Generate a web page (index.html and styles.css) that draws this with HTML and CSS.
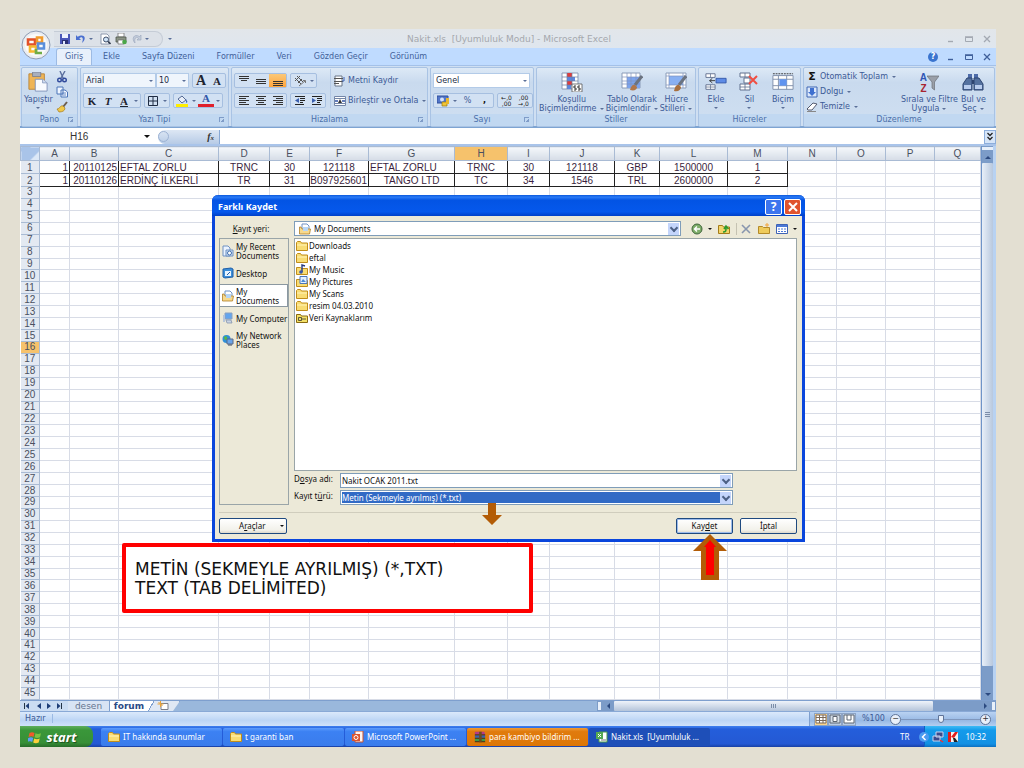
FILE: index.html
```html
<!DOCTYPE html>
<html lang="tr">
<head>
    <meta charset="UTF-8">
    <meta name="viewport" content="width=device-width, initial-scale=1.0">
    <title>Nakit.xls - Microsoft Excel</title>
    <link rel="stylesheet" href="styles.css">
</head>
<body>
    <!-- Icon sprite -->
    <svg class="sprite" aria-hidden="true">
        <symbol id="i-save" viewBox="0 0 12 12"><path d="M1 1h10v10H1z" fill="#4a56b8"/><path d="M3 1h6v4H3z" fill="#eef2ff"/><path d="M3 7h6v4H3z" fill="#2b2f70"/><path d="M4 8h2v3H4z" fill="#dfe6ff"/></symbol>
        <symbol id="i-undo" viewBox="0 0 12 12"><path d="M1 2v5h5L4.300 5.300C7 3 9 5 7 10c5-4 3-10-4.500-6.300z" fill="#4a6fd0"/></symbol>
        <symbol id="i-redo" viewBox="0 0 12 12"><path d="M10 2v5H6l1.500-1.600C5 3 3 5 4 10 0 6 3 0 8.500 3.600z" fill="#c3ccdb" stroke="#98a5ba" stroke-width=".6"/></symbol>
        <symbol id="i-preview" viewBox="0 0 12 12"><path d="M2 1h6l2 2v8H2z" fill="#fff" stroke="#77849c" stroke-width=".8"/><circle cx="7" cy="6.500" r="2.500" fill="#cfe3f7" stroke="#40506c"/><path d="M9 8.500l2.500 2.500" stroke="#30394c" stroke-width="1.600"/></symbol>
        <symbol id="i-print" viewBox="0 0 12 12"><path d="M3 0h6v4H3z" fill="#fff" stroke="#666" stroke-width=".7"/><path d="M1 4h10v5H1z" fill="#8b9486" stroke="#4e554b" stroke-width=".8"/><path d="M3 7h6v4H3z" fill="#fff" stroke="#666" stroke-width=".7"/><circle cx="9.500" cy="9" r="2.300" fill="#4aa648"/></symbol>
        <symbol id="i-paste" viewBox="0 0 22 22"><path d="M1 2h17v17H1z" fill="#efb556" stroke="#b98437"/><path d="M5 0h9v5H5z" fill="#a8afbd" stroke="#6e7890" stroke-width=".8"/><path d="M8 8h8l5 4v9H8z" fill="#f8fbff" stroke="#7f92b8"/><path d="M16 8v4h5" fill="#cfdcf2" stroke="#7f92b8" stroke-width=".8"/></symbol>
        <symbol id="i-cut" viewBox="0 0 12 12"><path d="M4 0l3.500 8M9 0L4.500 8" stroke="#5b6f9e" stroke-width="1.400"/><circle cx="3.500" cy="9" r="1.800" fill="none" stroke="#304a9c" stroke-width="1.400"/><circle cx="8.500" cy="9" r="1.800" fill="none" stroke="#304a9c" stroke-width="1.400"/></symbol>
        <symbol id="i-copy" viewBox="0 0 12 12"><path d="M1 1h6v7H1zM5 4h4l2.500 2v5H5z" fill="#eef5ff" stroke="#4b74b8"/><path d="M6 7h4M6 9h4" stroke="#4b74b8" stroke-width=".8"/></symbol>
        <symbol id="i-brush" viewBox="0 0 12 12"><path d="M11 1L7 6" stroke="#6d5d4d" stroke-width="2"/><path d="M1 8c3 0 3-4 6-3l2 2c0 3-3 4-6 4z" fill="#f0c84a" stroke="#a37a1c" stroke-width=".7"/></symbol>
        <symbol id="i-border" viewBox="0 0 12 12"><path d="M1.500 1.500h9v9h-9zM6 1v10M1 6h10" fill="none" stroke="#1e2c44"/></symbol>
        <symbol id="i-fill" viewBox="0 0 12 12"><path d="M2 4l4-3 4 4-4 3z" fill="#e8eef8" stroke="#556a95"/><path d="M10 4l1.500 3-1.500 1z" fill="#3e66b5"/><path d="M0 9h12v3H0z" fill="#ffee00"/></symbol>
        <symbol id="i-top" viewBox="0 0 12 12"><path d="M1 1.500h10M1 3.500h10M3 5.500h6" stroke="#333"/></symbol>
        <symbol id="i-middle" viewBox="0 0 12 12"><path d="M1 4.500h10M1 6.500h10M1 8.500h10" stroke="#333"/></symbol>
        <symbol id="i-bottom" viewBox="0 0 12 12"><path d="M1 6.500h10M1 8.500h10M1 10.500h10" stroke="#333"/></symbol>
        <symbol id="i-left" viewBox="0 0 12 12"><path d="M1 1.500h10M1 3.500h7M1 5.500h10M1 7.500h7M1 9.500h10" stroke="#333"/></symbol>
        <symbol id="i-center" viewBox="0 0 12 12"><path d="M1 1.500h10M3 3.500h6M1 5.500h10M3 7.500h6M1 9.500h10" stroke="#333"/></symbol>
        <symbol id="i-right" viewBox="0 0 12 12"><path d="M1 1.500h10M4 3.500h7M1 5.500h10M4 7.500h7M1 9.500h10" stroke="#333"/></symbol>
        <symbol id="i-outdent" viewBox="0 0 12 12"><path d="M1 1.500h10M6 3.500h5M6 5.500h5M6 7.500h3M1 9.500h9" stroke="#222"/><path d="M5 3v5L1 5.500z" fill="#3b5fae"/></symbol>
        <symbol id="i-indent" viewBox="0 0 12 12"><path d="M1 1.500h10M6 3.500h5M6 5.500h5M6 7.500h3M1 9.500h9" stroke="#222"/><path d="M1 3v5l4-2.500z" fill="#3b5fae"/></symbol>
        <symbol id="i-orient" viewBox="0 0 12 12"><path d="M1 3l6 6M3 1l6 6M1 6l5-5M4 8l4-4" stroke="#555" fill="none"/><path d="M5 11l6-5M9 5.500h2.500V8" stroke="#777" fill="none"/></symbol>
        <symbol id="i-wrap" viewBox="0 0 12 12"><path d="M1 1h7v10H1z" fill="#fff" stroke="#6b7688"/><path d="M0 3.500h9M0 6.500h9M0 8.500h5" stroke="#555"/><path d="M10 2v4H8" fill="none" stroke="#3f63b4"/></symbol>
        <symbol id="i-merge" viewBox="0 0 12 12"><path d="M.5 1.500h11v9H.5zM.5 3.500h11M.5 8.500h11" fill="#fff" stroke="#7486a8"/><path d="M1 6h3M11 6H8" stroke="#3254a8" stroke-width="1.500"/><path d="M6 4l2 4H4z" fill="#333"/></symbol>
        <symbol id="i-money" viewBox="0 0 12 12"><path d="M0 1h11v7H0z" fill="#5276c9" stroke="#2f4f9c"/><circle cx="5" cy="4.500" r="2" fill="#d5e2fa"/><path d="M5 7h5v4H5z" fill="#f1c537" stroke="#9a7a12" stroke-width=".7"/><path d="M9 3h3v6H9z" fill="#e9b62d"/></symbol>
        <symbol id="i-condfmt" viewBox="0 0 22 20"><path d="M1 1h16v16H1z" fill="#fff" stroke="#8b9cb8"/><path d="M6 1h5v4H6zM6 9h5v4H6z" fill="#e03c3c"/><path d="M6 5h8v4H6zM6 13h4v4H6z" fill="#5c86e0"/><path d="M1 5h16M1 9h16M1 13h16M6 1v16M11 1v16" stroke="#6b7ea4" stroke-width=".7"/><path d="M11 12h10v8H11z" fill="#fff" stroke="#555" stroke-width=".8"/><path d="M15 14h-2v2h2v2h-2M19 14h-2v2h2v2h-2" fill="none" stroke="#333"/></symbol>
        <symbol id="i-tablefmt" viewBox="0 0 22 20"><path d="M1 1h18v15H1z" fill="#fff" stroke="#8b9cb8"/><path d="M6 5h13v11H6z" fill="#7ba4ee"/><path d="M1 5h18M1 9h18M1 12h18M6 1v15M10 1v15M15 1v15" stroke="#7f94bd" stroke-width=".7"/><path d="M21 4l-7 9" stroke="#6b7380" stroke-width="3"/><path d="M9 18c1-4 3-6 5-5l2 2c0 3-3 4-7 3z" fill="#b0764a"/></symbol>
        <symbol id="i-cellstyle" viewBox="0 0 22 20"><path d="M1 1h20v15H1z" fill="#fff" stroke="#8b9cb8"/><path d="M4 4h14v9H4z" fill="#88b0f2"/><path d="M1 4h20M1 13h20M4 1v15M18 1v15" stroke="#7f94bd" stroke-width=".7"/><path d="M21 4l-7 9" stroke="#6b7380" stroke-width="3"/><path d="M9 19c1-5 3-7 5-6l2 2c0 3-3 5-7 4z" fill="#a8703f"/></symbol>
        <symbol id="i-insert" viewBox="0 0 24 20"><path d="M1 1h10v4H1zM1 13h10v5H1z" fill="#fff" stroke="#60708e"/><path d="M6 1v4M6 13v5M1 15.500h10" stroke="#60708e" stroke-width=".8"/><path d="M12 6h11v5H12z" fill="#5d8be6" stroke="#3258a8"/><path d="M5 8.500h6M8 6L5 8.500 8 11" fill="none" stroke="#333"/></symbol>
        <symbol id="i-delete" viewBox="0 0 22 20"><path d="M2 1h10v4H2zM6 6h6v5H6zM2 12h10v6H2z" fill="#fff" stroke="#60708e"/><path d="M7 1v4M7 12v6M2 15h10" stroke="#60708e" stroke-width=".8"/><path d="M11 4l8 8M19 4l-8 8" stroke="#ef4e42" stroke-width="2"/></symbol>
        <symbol id="i-format" viewBox="0 0 24 20"><path d="M1 3h22v15H1z" fill="#fff" stroke="#7d8da8"/><path d="M7 3v15M16 3v15M1 7h22M1 14h22" stroke="#7d8da8"/><path d="M8 7h8v7H8z" fill="#5f93ef"/><path d="M1 1h22" stroke="#333" stroke-dasharray="2 1"/></symbol>
        <symbol id="i-down" viewBox="0 0 12 12"><path d="M1 1h10v10H1z" fill="#dbe8fc" stroke="#3f66b4"/><path d="M4 2h4v4h2L6 10 2 6h2z" fill="#3f70d0"/></symbol>
        <symbol id="i-eraser" viewBox="0 0 12 12"><path d="M1 8l6-6 4 1-5 6H2z" fill="#fff" stroke="#555b70"/><path d="M1 10.500h9" stroke="#888"/></symbol>
        <symbol id="i-funnel" viewBox="0 0 12 16"><path d="M0 1h12L7.500 7v8L5 13V7z" fill="#9a9fa8" stroke="#6c7077" stroke-width=".7"/></symbol>
        <symbol id="i-find" viewBox="0 0 22 20"><path d="M6 2h4v5H6zM12 2h4v5h-4z" fill="#4d6ba8"/><path d="M5 6h5v12H1v-6zM12 6h5l4 6v6h-9z" fill="#54719f" stroke="#2d4470"/><path d="M10 8h2v4h-2z" fill="#2d4470"/><path d="M2 13h7v4H2zM13 13h7v4h-7z" fill="#b9cdee"/></symbol>
        <symbol id="i-folder" viewBox="0 0 12 12"><path d="M.5 10.500v-8l1-1h3l1 1.500h6v7.500z" fill="#f8dc74" stroke="#c08d1a"/><path d="M1 5h10" stroke="#fff3b8"/></symbol>
        <symbol id="i-music" viewBox="0 0 12 12"><path d="M.5 10.500v-7h4l1 1h6v6z" fill="#f8dc74" stroke="#c08d1a"/><path d="M6 8V1l3 1" fill="none" stroke="#26387c" stroke-width="1.400"/><circle cx="5" cy="8" r="1.800" fill="#3956a8"/></symbol>
        <symbol id="i-pics" viewBox="0 0 12 12"><path d="M.5 10.500v-7h4l1 1h6v6z" fill="#f8dc74" stroke="#c08d1a"/><path d="M4 .5h7v7H4z" fill="#e6f1ff" stroke="#4c76b8"/><path d="M5 6l2-3 3 3z" fill="#4f8bd2"/></symbol>
        <symbol id="i-dbfolder" viewBox="0 0 12 12"><path d="M.5 10.500v-8h4l1 1.500h6v6.500z" fill="#f3e067" stroke="#8a6a10"/><path d="M2.500 5.500h3v3h-3zM6 7h4" fill="none" stroke="#333" stroke-width=".8"/></symbol>
        <symbol id="i-recent" viewBox="0 0 12 12"><path d="M1 1h5l2 2v8H1z" fill="#eaf3ff" stroke="#6f91c2"/><path d="M4 5h7v6H4z" fill="#cfe0f5" stroke="#6f91c2"/><circle cx="7.500" cy="8" r="2" fill="#fff" stroke="#406fae"/></symbol>
        <symbol id="i-desktop" viewBox="0 0 12 12"><path d="M1 2l8-1 2 1v8l-8 1-2-1z" fill="#3c8ed8" stroke="#1f5fa8"/><path d="M3 4h6v5H3z" fill="#e8f4ff"/><path d="M5 8l3-3" stroke="#1f5fa8"/></symbol>
        <symbol id="i-docs" viewBox="0 0 12 12"><path d="M3 1h5l2 2v5H3z" fill="#fff" stroke="#6f91c2"/><path d="M.5 4v7h10l1-5H3L2 4z" fill="#f7d98d" stroke="#b07f25" stroke-width=".8"/><path d="M4 4h5v4H4z" fill="#b6d5f4"/></symbol>
        <symbol id="i-computer" viewBox="0 0 12 12"><path d="M3 1h7v6H3z" fill="#63a5ee" stroke="#8aa0c0"/><path d="M4 8h5l1 3H5z" fill="#c9d4e4" stroke="#7d8ca8" stroke-width=".7"/><path d="M1 3h2v7H1z" fill="#b8c6da"/></symbol>
        <symbol id="i-network" viewBox="0 0 12 12"><circle cx="4.500" cy="5" r="4" fill="#2f8fd8"/><path d="M2 3c2-2 4 0 3 2s-3 1-3-2z" fill="#58b847"/><path d="M5 5h6v5H5z" fill="#6aa4ea" stroke="#5c6a86"/><path d="M6 11h4" stroke="#3c4a66"/></symbol>
        <symbol id="i-back" viewBox="0 0 12 12"><circle cx="6" cy="6" r="5" fill="#7fae6b" stroke="#40663a"/><path d="M9 6H4M6 3.500L3.500 6 6 8.500" fill="none" stroke="#fff" stroke-width="1.400"/></symbol>
        <symbol id="i-upfolder" viewBox="0 0 12 12"><path d="M.5 10.500v-8h4l1 1.500h6v6.500z" fill="#f4d56a" stroke="#a47c18"/><path d="M5 9c3 0 3-1 3-4M6 6l2-3 2.500 3" fill="none" stroke="#2d9a2d" stroke-width="1.600"/></symbol>
        <symbol id="i-x" viewBox="0 0 12 12"><path d="M2 2l8 8M10 2l-8 8" stroke="#8896ae" stroke-width="1.600"/></symbol>
        <symbol id="i-newfolder" viewBox="0 0 12 12"><path d="M.5 10.500v-7h4l1 1h6v6z" fill="#efcb5a" stroke="#b48a28"/><path d="M9 0v4M7 2h4" stroke="#f3a53a"/></symbol>
        <symbol id="i-views" viewBox="0 0 12 12"><path d="M.5 1.500h11v9H.5z" fill="#fff" stroke="#3f63b4"/><path d="M1 2h10v2H1z" fill="#4c79d8"/><path d="M2 6h2M5 6h2M8 6h2M2 8.500h2M5 8.500h2M8 8.500h2" stroke="#4c79d8"/></symbol>
        <symbol id="i-flag" viewBox="0 0 14 14"><path d="M1.500 3c2-1 3-1 5 0L5.500 7C4 6 3 6 .500 7z" fill="#f15a2b"/><path d="M7.500 3.300c2 1 3 1 5.500 0l-1 4c-2 1-4 1-5.500 0z" fill="#7cc242"/><path d="M.2 8c2-1 3.500-1 5 0l-1 4c-1.500-1-3-1-5 0z" fill="#5d9df5"/><path d="M6.200 8.500c2 1 3.500 1 5.500 0l-1 4c-2 1-4 1-5.500 0z" fill="#fbd03c"/></symbol>
        <symbol id="i-ppt" viewBox="0 0 12 12"><path d="M3 0h8v11H3z" fill="#fff3ee" stroke="#c9532f"/><path d="M0 3h8v7H0z" fill="#dc5430"/><circle cx="4" cy="6.500" r="2" fill="none" stroke="#fff"/></symbol>
        <symbol id="i-rar" viewBox="0 0 14 12"><path d="M1 0h11l1 3H1z" fill="#b23a87"/><path d="M1 4h12v3H1z" fill="#3262b8"/><path d="M1 8h12v3H1z" fill="#3e9c48"/><path d="M1 3.500h12M1 7.500h12M1 11.500h12" stroke="#222"/><path d="M6 0h3v12H6z" fill="#6b4b20"/></symbol>
        <symbol id="i-xls" viewBox="0 0 12 12"><path d="M3 1h8v10H3z" fill="#fff" stroke="#4b9a4b"/><path d="M0 1h7v7H0z" fill="#55a852"/><path d="M2 3l3 3M5 3L2 6" stroke="#fff"/><path d="M5 9h5" stroke="#777"/></symbol>
        <symbol id="i-gridview" viewBox="0 0 12 10"><path d="M1 1h10v8H1zM4.500 1v8M8 1v8M1 3.500h10M1 6.500h10" fill="#fff" stroke="#79695a"/></symbol>
        <symbol id="i-pageview" viewBox="0 0 12 10"><path d="M1 1h10v8H1z" fill="#d6dfe9" stroke="#5d6673"/><path d="M4 2.500h4v5H4z" fill="#fff" stroke="#5d6673"/></symbol>
        <symbol id="i-breakview" viewBox="0 0 12 10"><path d="M1 1h10v8H1z" fill="#fff" stroke="#5d6673"/><path d="M4 1v5h4V1" fill="none" stroke="#5d6673"/></symbol>
        <symbol id="i-net" viewBox="0 0 12 12"><path d="M4 1h7v5H4zM1 5h7v5H1z" fill="#3b4a8c" stroke="#c9d3ee"/><path d="M8 9l3 2" stroke="#e33" stroke-width="1.500"/></symbol>
        <symbol id="i-kav" viewBox="0 0 12 12"><path d="M1 1h10v10H1z" fill="#f4f4f4"/><path d="M1 1h3v10H1zM4 6l4-5h3L7 7z" fill="#e01d1d"/><path d="M6 7h2l3 4H7z" fill="#222"/></symbol>
        <symbol id="i-winmin" viewBox="0 0 10 10"><path d="M2 7.500h5" stroke="currentColor" stroke-width="1.400"/></symbol>
        <symbol id="i-winmax" viewBox="0 0 10 10"><path d="M1.500 3.500h7v4h-7z" fill="none" stroke="currentColor"/><path d="M1 3h8" stroke="currentColor" stroke-width="1.500"/></symbol>
        <symbol id="i-winclose" viewBox="0 0 10 10"><path d="M2 2l6 6M8 2L2 8" stroke="currentColor" stroke-width="1.300"/></symbol>
    </svg>

    <main class="desktop">
        <!-- Title bar -->
        <header class="titlebar">
            <div class="quick-access">
                <button aria-label="Kaydet"><svg><use href="#i-save"/></svg></button>
                <button aria-label="Geri al"><svg><use href="#i-undo"/></svg><i class="caret"></i></button>
                <button aria-label="Baskı önizleme"><svg><use href="#i-preview"/></svg></button>
                <button aria-label="Yazdır"><svg><use href="#i-print"/></svg></button>
                <button class="faded" aria-label="Yinele"><svg><use href="#i-redo"/></svg><i class="caret"></i></button>
            </div>
            <button class="qa-more" aria-label="Özelleştir"><i class="caret"></i></button>
            <h1>Nakit.xls&nbsp; [Uyumluluk Modu] - Microsoft Excel</h1>
            <div class="win-buttons faded">
                <button aria-label="Simge"><svg><use href="#i-winmin"/></svg></button>
                <button aria-label="Önceki boyut"><svg><use href="#i-winmax"/></svg></button>
                <button aria-label="Kapat"><svg><use href="#i-winclose"/></svg></button>
            </div>
        </header>

        <button class="office" aria-label="Office">
            <svg viewBox="0 0 30 30"><circle cx="15" cy="15" r="14" fill="#eceef2" stroke="#8e9cb4"/><circle cx="15" cy="15" r="11" fill="#fafafa"/><g fill="none" stroke-width="2.600"><path d="M7 9.500h7v5H7z" stroke="#e2502a"/><path d="M16 7.500h5v5h-5z" stroke="#f09a2c"/><path d="M9 16.500h6v5H9z" stroke="#f6b830"/><path d="M17 13.500h6v5h-6z" stroke="#5a8fdc"/><path d="M15 19v4h6" stroke="#70ad47"/></g></svg>
        </button>

        <nav class="tabs">
            <a class="active" href="#giris">Giriş</a>
            <a href="#ekle">Ekle</a>
            <a href="#sayfa">Sayfa Düzeni</a>
            <a href="#formul">Formüller</a>
            <a href="#veri">Veri</a>
            <a href="#gozden">Gözden Geçir</a>
            <a href="#gorunum">Görünüm</a>
            <div class="win-buttons">
                <button class="help" aria-label="Yardım">?</button>
                <button aria-label="Simge"><svg><use href="#i-winmin"/></svg></button>
                <button aria-label="Önceki boyut"><svg><use href="#i-winmax"/></svg></button>
                <button aria-label="Kapat"><svg><use href="#i-winclose"/></svg></button>
            </div>
        </nav>

        <!-- Ribbon -->
        <section class="ribbon" id="giris">
            <div class="group g-clipboard">
                <div class="tools">
                    <button class="big"><svg class="large"><use href="#i-paste"/></svg>Yapıştır<i class="caret"></i></button>
                    <div class="stack">
                        <button aria-label="Kes"><svg><use href="#i-cut"/></svg></button>
                        <button aria-label="Kopyala"><svg><use href="#i-copy"/></svg></button>
                        <button aria-label="Biçim Boyacısı"><svg><use href="#i-brush"/></svg></button>
                    </div>
                </div>
                <h2>Pano<i class="launcher"></i></h2>
            </div>
            <div class="group g-font">
                <div class="tools">
                    <div class="rows">
                        <div class="row">
                            <div class="combos">
                                <span class="combo font-name"><select aria-label="Yazı tipi"><option>Arial</option></select><i class="caret"></i></span>
                                <span class="combo font-size"><select aria-label="Boyut"><option>10</option></select><i class="caret"></i></span>
                            </div>
                            <div class="set"><button class="letter grow">A</button><button class="letter">A</button></div>
                        </div>
                        <div class="row">
                            <div class="set"><button class="letter">K</button><button class="letter"><em>T</em></button><button class="letter"><u>A</u></button><i class="caret"></i></div>
                            <div class="set"><button aria-label="Kenarlık"><svg><use href="#i-border"/></svg></button><i class="caret"></i></div>
                            <div class="set"><button aria-label="Dolgu"><svg><use href="#i-fill"/></svg></button><i class="caret"></i><button class="letter color">A</button><i class="caret"></i></div>
                        </div>
                    </div>
                </div>
                <h2>Yazı Tipi<i class="launcher"></i></h2>
            </div>
            <div class="group g-align">
                <div class="tools">
                    <div class="rows">
                        <div class="row">
                            <div class="set"><button aria-label="Üst"><svg><use href="#i-top"/></svg></button><button aria-label="Orta"><svg><use href="#i-middle"/></svg></button><button class="on" aria-label="Alt"><svg><use href="#i-bottom"/></svg></button></div>
                            <div class="set"><button aria-label="Yönlendirme"><svg><use href="#i-orient"/></svg></button><i class="caret"></i></div>
                        </div>
                        <div class="row">
                            <div class="set"><button aria-label="Sola"><svg><use href="#i-left"/></svg></button><button aria-label="Ortala"><svg><use href="#i-center"/></svg></button><button aria-label="Sağa"><svg><use href="#i-right"/></svg></button></div>
                            <div class="set"><button aria-label="Girinti azalt"><svg><use href="#i-outdent"/></svg></button><button aria-label="Girinti artır"><svg><use href="#i-indent"/></svg></button></div>
                        </div>
                    </div>
                    <div class="rows divided">
                        <div class="row"><button class="wide"><svg><use href="#i-wrap"/></svg>Metni Kaydır</button></div>
                        <div class="row"><button class="wide"><svg><use href="#i-merge"/></svg>Birleştir ve Ortala<i class="caret"></i></button></div>
                    </div>
                </div>
                <h2>Hizalama<i class="launcher"></i></h2>
            </div>
            <div class="group g-number">
                <div class="tools">
                    <div class="rows">
                        <div class="row"><span class="combo format"><select aria-label="Sayı biçimi"><option>Genel</option></select><i class="caret"></i></span></div>
                        <div class="row">
                            <div class="set"><button aria-label="Para"><svg><use href="#i-money"/></svg></button><i class="caret"></i><button>%</button><button class="comma">,</button></div>
                            <div class="set"><button class="digits">←,0<br>,00</button><button class="digits">,00<br>→,0</button></div>
                        </div>
                    </div>
                </div>
                <h2>Sayı<i class="launcher"></i></h2>
            </div>
            <div class="group g-styles">
                <div class="tools">
                    <button class="big"><svg class="large"><use href="#i-condfmt"/></svg>Koşullu<span>Biçimlendirme<i class="caret"></i></span></button>
                    <button class="big"><svg class="large"><use href="#i-tablefmt"/></svg>Tablo Olarak<span>Biçimlendir<i class="caret"></i></span></button>
                    <button class="big"><svg class="large"><use href="#i-cellstyle"/></svg>Hücre<span>Stilleri<i class="caret"></i></span></button>
                </div>
                <h2>Stiller</h2>
            </div>
            <div class="group g-cells">
                <div class="tools">
                    <button class="big"><svg class="large"><use href="#i-insert"/></svg>Ekle<i class="caret"></i></button>
                    <button class="big"><svg class="large"><use href="#i-delete"/></svg>Sil<i class="caret"></i></button>
                    <button class="big"><svg class="large"><use href="#i-format"/></svg>Biçim<i class="caret"></i></button>
                </div>
                <h2>Hücreler</h2>
            </div>
            <div class="group g-edit">
                <div class="tools">
                    <div class="stack labels">
                        <button class="wide"><b class="sigma">Σ</b>Otomatik Toplam<i class="caret"></i></button>
                        <button class="wide"><svg><use href="#i-down"/></svg>Dolgu<i class="caret"></i></button>
                        <button class="wide"><svg><use href="#i-eraser"/></svg>Temizle<i class="caret"></i></button>
                    </div>
                    <button class="big"><span class="az"><span><b class="a">A</b><b class="z">Z</b></span><svg><use href="#i-funnel"/></svg></span>Sırala ve Filtre<span>Uygula<i class="caret"></i></span></button>
                    <button class="big"><svg class="large"><use href="#i-find"/></svg>Bul ve<span>Seç<i class="caret"></i></span></button>
                </div>
                <h2>Düzenleme</h2>
            </div>
        </section>

        <!-- Formula bar -->
        <div class="formula-bar">
            <input class="name-box" aria-label="Ad kutusu" value="H16">
            <i class="caret dark"></i>
            <button class="fx"><span class="knob"></span><em>f<small>x</small></em></button>
            <input class="formula" aria-label="Formül">
            <button class="expand" aria-label="Genişlet"><svg viewBox="0 0 8 12"><path d="M1.500 2L4 4.500 6.500 2M1.500 6L4 8.500 6.500 6" fill="none" stroke="#222" stroke-width="1.300"/></svg></button>
        </div>

        <!-- Worksheet -->
        <div class="sheet">
            <div class="cells">
                <table>
                    <colgroup>
                        <col class="c-head"><col class="c-a"><col class="c-b"><col class="c-c"><col class="c-d"><col class="c-e"><col class="c-f"><col class="c-g"><col class="c-h"><col class="c-i"><col class="c-j"><col class="c-k"><col class="c-l"><col class="c-m"><col class="c-n"><col class="c-n"><col class="c-n"><col>
                    </colgroup>
                    <thead>
                        <tr><th class="corner"></th><th>A</th><th>B</th><th>C</th><th>D</th><th>E</th><th>F</th><th>G</th><th class="current">H</th><th>I</th><th>J</th><th>K</th><th>L</th><th>M</th><th>N</th><th>O</th><th>P</th><th>Q</th></tr>
                    </thead>
                    <tbody id="rows">
                        <tr class="data"><th>1</th><td class="num">1</td><td class="num">20110125</td><td class="txt">EFTAL ZORLU</td><td>TRNC</td><td>30</td><td>121118</td><td class="txt">EFTAL ZORLU</td><td>TRNC</td><td>30</td><td>121118</td><td>GBP</td><td>1500000</td><td>1</td><td></td><td></td><td></td><td></td></tr>
                        <tr class="data"><th>2</th><td class="num">1</td><td class="num">20110126</td><td class="txt">ERDİNÇ İLKERLİ</td><td>TR</td><td>31</td><td class="num">B097925601</td><td>TANGO LTD</td><td>TC</td><td>34</td><td>1546</td><td>TRL</td><td>2600000</td><td>2</td><td></td><td></td><td></td><td></td></tr>
                    </tbody>
                </table>
            </div>
            <div class="vscroll">
                <span class="split"></span>
                <button class="up" aria-label="Yukarı"><i></i></button>
                <span class="thumb"><i class="grip"></i></span>
                <button class="down" aria-label="Aşağı"><i></i></button>
            </div>
        </div>

        <!-- Sheet tabs -->
        <div class="sheet-bar">
            <div class="sheet-nav">
                <svg viewBox="0 0 44 10"><path d="M4.500 2v6M41.500 2v6" stroke="#234"/><path d="M9 2v6L5.500 5zM21 2v6l-4-3zM27 2v6l4-3zM37 2v6l3.500-3z" fill="#1f3f78"/></svg>
            </div>
            <button class="sheet-tab">desen</button>
            <button class="sheet-tab active">forum</button>
            <button class="sheet-tab new" aria-label="Çalışma Sayfası Ekle"><svg viewBox="0 0 14 10"><path d="M4 2.500h7v6H4z" fill="#fff" stroke="#7b7f8a"/><path d="M3.500 0v6M.5 3h6M1.500 1l4 4" stroke="#e8a33a"/></svg></button>
            <span class="fill"></span>
            <div class="hscroll">
                <span class="split"></span>
                <button aria-label="Sola"><i class="lt"></i></button>
                <span class="thumb"><i class="grip"></i></span>
                <button aria-label="Sağa"><i class="rt"></i></button>
                <span class="split"></span>
            </div>
        </div>

        <!-- Status bar -->
        <footer class="status">
            <span class="ready">Hazır</span>
            <div class="zoom-area">
                <div class="views">
                    <button class="on" aria-label="Normal"><svg><use href="#i-gridview"/></svg></button>
                    <button aria-label="Sayfa düzeni"><svg><use href="#i-pageview"/></svg></button>
                    <button aria-label="Sayfa sonu"><svg><use href="#i-breakview"/></svg></button>
                </div>
                <span class="percent">%100</span>
                <button class="round" aria-label="Uzaklaştır">−</button>
                <input type="range" aria-label="Yakınlaştırma" min="0" max="100" value="50">
                <button class="round" aria-label="Yakınlaştır">+</button>
            </div>
        </footer>

        <!-- Windows taskbar -->
        <div class="taskbar">
            <button class="start"><svg><use href="#i-flag"/></svg>start</button>
            <button class="task"><svg><use href="#i-folder"/></svg>IT hakkında sunumlar</button>
            <button class="task"><svg><use href="#i-folder"/></svg>t garanti ban</button>
            <button class="task"><svg><use href="#i-ppt"/></svg>Microsoft PowerPoint ...</button>
            <button class="task alert"><svg><use href="#i-rar"/></svg>para kambiyo bildirim ...</button>
            <button class="task pressed"><svg><use href="#i-xls"/></svg>Nakit.xls&nbsp; [Uyumluluk ...</button>
            <span class="lang">TR</span>
            <div class="tray">
                <button class="chevron" aria-label="Gizli simgeler"><svg viewBox="0 0 10 10"><path d="M6.500 2L3.500 5l3 3" fill="none" stroke="#fff" stroke-width="1.500"/></svg></button>
                <svg><use href="#i-net"/></svg>
                <svg><use href="#i-kav"/></svg>
                <time>10:32</time>
            </div>
        </div>

        <!-- Save As dialog -->
        <form class="dialog" onsubmit="return false">
            <div class="dialog-title">
                <h2>Farklı Kaydet</h2>
                <button type="button" class="ask" aria-label="Yardım">?</button>
                <button type="button" class="close" aria-label="Kapat"><svg viewBox="0 0 12 12"><path d="M2 2l8 8M10 2l-8 8" stroke="#fff" stroke-width="2"/></svg></button>
            </div>
            <div class="dialog-body">
                <label class="lookin-label" for="lookin"><u>K</u>ayıt yeri:</label>
                <div class="lookin">
                    <span class="xp-select with-icon"><svg><use href="#i-docs"/></svg><select id="lookin"><option>My Documents</option></select><i class="drop"></i></span>
                    <div class="dialog-tools">
                        <button type="button" aria-label="Geri"><svg><use href="#i-back"/></svg><i class="caret dark"></i></button>
                        <button type="button" aria-label="Üst klasör"><svg><use href="#i-upfolder"/></svg></button>
                        <button type="button" class="sep" aria-label="Sil"><svg><use href="#i-x"/></svg></button>
                        <button type="button" aria-label="Yeni klasör"><svg><use href="#i-newfolder"/></svg></button>
                        <button type="button" aria-label="Görünümler"><svg><use href="#i-views"/></svg><i class="caret dark"></i></button>
                    </div>
                </div>
                <div class="places">
                    <button type="button"><svg><use href="#i-recent"/></svg><span>My Recent Documents</span></button>
                    <button type="button"><svg><use href="#i-desktop"/></svg><span>Desktop</span></button>
                    <button type="button" class="selected"><svg><use href="#i-docs"/></svg><span>My<br>Documents</span></button>
                    <button type="button"><svg><use href="#i-computer"/></svg><span>My Computer</span></button>
                    <button type="button"><svg><use href="#i-network"/></svg><span>My Network Places</span></button>
                </div>
                <div class="file-side">
                    <ul class="files">
                        <li><svg><use href="#i-folder"/></svg>Downloads</li>
                        <li><svg><use href="#i-folder"/></svg>eftal</li>
                        <li><svg><use href="#i-music"/></svg>My Music</li>
                        <li><svg><use href="#i-pics"/></svg>My Pictures</li>
                        <li><svg><use href="#i-folder"/></svg>My Scans</li>
                        <li><svg><use href="#i-folder"/></svg>resim 04.03.2010</li>
                        <li><svg><use href="#i-dbfolder"/></svg>Veri Kaynaklarım</li>
                    </ul>
                    <div class="field">
                        <label for="filename">D<u>o</u>sya adı:</label>
                        <span class="xp-select"><input id="filename" value="Nakit OCAK 2011.txt"><i class="drop"></i></span>
                    </div>
                    <div class="field">
                        <label for="filetype">Kayıt t<u>ü</u>rü:</label>
                        <span class="xp-select highlight"><select id="filetype"><option>Metin (Sekmeyle ayrılmış) (*.txt)</option></select><i class="drop"></i></span>
                    </div>
                </div>
            </div>
            <div class="dialog-actions">
                <button type="button" class="xp-button tools-menu"><span>A<u>r</u>açlar</span><i class="caret dark"></i></button>
                <button class="xp-button primary"><span>Kay<u>d</u>et</span></button>
                <button type="button" class="xp-button">İptal</button>
            </div>
        </form>

        <!-- Annotations -->
        <p class="callout">METİN (SEKMEYLE AYRILMIŞ) (*,TXT)<br>TEXT (TAB DELİMİTED)</p>
        <svg class="arrow-down" viewBox="0 0 20 22"><path d="M6 0h8v12h6L10 22 0 12h6z" fill="#b35c06"/></svg>
        <svg class="arrow-up" viewBox="0 0 34 46"><path d="M17 0l17 17h-8v29H8V17H0z" fill="#b35c06"/><path d="M17 6l6 7h-2v28h-8V13h-2z" fill="#ff0000"/></svg>
    </main>

    <script>
    // Empty rows 3 - 45
    const body = document.getElementById('rows');
    for (let n = 3; n <= 45; n++) {
        const tr = document.createElement('tr');
        const th = document.createElement('th');
        th.textContent = n;
        if (n === 16) th.className = 'current';
        tr.appendChild(th);
        for (let c = 0; c < 17; c++) {
            tr.appendChild(document.createElement('td'));
        }
        body.appendChild(tr);
    }
    </script>
</body>
</html>
```
FILE: styles.css
```css
/* General Styles */
* {
    box-sizing: border-box;
}

body {
    margin: 0;
    height: 100vh;
    padding: 29px 28px 21px 20px;
    background: #e3dfd2;
    font-family: "DejaVu Sans", Verdana, sans-serif;
    font-size: 8px;
    line-height: 10px;
    color: #3c5a96;
    overflow: hidden;
}

button,
input,
select {
    margin: 0;
    padding: 0;
    border: none;
    border-radius: 0;
    background: none;
    font: inherit;
    color: inherit;
    outline: none;
    appearance: none;
    min-width: 0;
}

button {
    display: flex;
    align-items: center;
    justify-content: center;
    white-space: nowrap;
}

h1,
h2 {
    margin: 0;
    font-size: inherit;
    font-weight: normal;
}

svg {
    display: block;
    width: 12px;
    height: 12px;
    flex: none;
}

.sprite {
    position: absolute;
    width: 0;
    height: 0;
}

.caret {
    flex: none;
    width: 0;
    border: 2px solid transparent;
    border-top-color: #5a6f98;
    border-bottom: none;
    margin: 0 2px;
}

.caret.dark {
    border-top-color: #111;
}

.desktop {
    position: relative;
    display: flex;
    flex-direction: column;
    height: 100%;
    background: #bfdbff;
}

/* Title bar */
.titlebar {
    display: flex;
    align-items: center;
    height: 19px;
    padding-left: 34px;
    background: linear-gradient(#e2e6ea, #dfe6ee);
}

.quick-access {
    display: flex;
    align-items: center;
    gap: 4px;
    width: 109px;
    height: 16px;
    padding-left: 5px;
    border: 1px solid #c5ccd6;
    border-left: none;
    border-radius: 0 8px 8px 0;
    background: #dce1e8;
}

.faded {
    color: #a3a9b2;
}

.qa-more {
    width: 14px;
}

.titlebar h1 {
    flex: 1;
    padding-right: 105px;
    text-align: center;
    font-size: 9px;
    color: #a5a8ad;
}

.win-buttons {
    display: flex;
    gap: 8px;
    margin-left: auto;
    padding-right: 4px;
}

.win-buttons svg {
    width: 10px;
    height: 10px;
}

.help {
    width: 10px;
    height: 10px;
    border-radius: 50%;
    background: #3a74cf;
    color: #fff;
    font-weight: bold;
}

.office {
    position: absolute;
    left: 1px;
    top: 1px;
    z-index: 2;
}

.office svg {
    width: 30px;
    height: 30px;
}

/* Tabs */
.tabs {
    display: flex;
    align-items: center;
    height: 17px;
    padding-left: 36px;
    background: #bfdbff;
    color: #3f5f9a;
}

.tabs a {
    height: 17px;
    padding: 4px 11px 0;
    color: inherit;
    text-decoration: none;
    white-space: nowrap;
}

.tabs a.active {
    padding: 3px 8px 0;
    border: 1px solid #9dbbe4;
    border-bottom: none;
    border-radius: 3px 3px 0 0;
    background: #e8f0fb;
}

/* Ribbon */
.ribbon {
    display: flex;
    gap: 2px;
    height: 63px;
    padding: 1px 1px 0;
    border-top: 1px solid #a4c1e8;
    border-bottom: 2px solid #7ea4d2;
    background: #cfdff2;
}

.group {
    display: flex;
    flex-direction: column;
    flex: none;
    height: 60px;
    border: 1px solid #a9c3e4;
    border-radius: 2px;
    background: linear-gradient(#dde9f6, #c9daee 25%, #cfdff1);
}

.group h2 {
    position: relative;
    flex: none;
    height: 12px;
    line-height: 12px;
    text-align: center;
    background: #c1d8f1;
    color: #4c70a9;
}

.launcher {
    position: absolute;
    right: 4px;
    top: 3px;
    width: 5px;
    height: 5px;
    border-top: 1px solid #7f9cc8;
    border-left: 1px solid #7f9cc8;
    background: linear-gradient(135deg, transparent 60%, #7f9cc8 60%);
}

.tools {
    display: flex;
    flex: 1;
    align-items: flex-start;
    min-height: 0;
    padding: 1px 2px 0;
}

.g-clipboard { width: 57px; }
.g-font { width: 149px; }
.g-align { width: 197px; }
.g-number { width: 104px; }
.g-styles { width: 160px; }
.g-cells { width: 103px; }
.g-edit { flex: 1; }

.rows {
    display: flex;
    flex-direction: column;
    gap: 5px;
    padding-top: 4px;
}

.row {
    display: flex;
    gap: 3px;
    height: 15px;
}

.set {
    display: flex;
    align-items: center;
    height: 15px;
    border: 1px solid #a6bfe0;
    border-radius: 2px;
    background: #d2e1f3;
}

.set button {
    width: 17px;
    height: 13px;
}

.g-font .set button {
    width: 16px;
}

.set .on {
    background: linear-gradient(#fbc878, #ffa53c);
}

.letter {
    font-family: "Liberation Serif", serif;
    font-size: 11px;
    font-weight: bold;
    color: #1e2430;
}

.grow {
    font-size: 14px;
}

.color {
    box-shadow: inset 0 -3px #e0202c;
    line-height: 9px;
    color: #3056a8;
    align-items: flex-start;
}

.comma {
    color: #111;
    font-weight: bold;
}

.digits {
    font-size: 6px;
    line-height: 6px;
    color: #222;
}

.combos {
    display: flex;
}

.combo {
    display: flex;
    align-items: center;
    height: 15px;
    border: 1px solid #b3cbe8;
    background: #eff5fc;
}

.combo select {
    flex: 1;
    padding-left: 2px;
    color: #222c44;
}

.font-name { width: 73px; }
.font-size { width: 33px; }
.format { width: 97px; background: #fff; }

.big {
    flex-direction: column;
    justify-content: flex-start;
    padding-top: 3px;
    line-height: 9px;
}

.big .large {
    width: 22px;
    height: 20px;
    margin-bottom: 3px;
}

.big span {
    display: flex;
    align-items: center;
}

.big .caret {
    margin: 0 1px 0 3px;
}

.big > .caret {
    margin: 3px 0 0;
}

.g-clipboard .tools {
    gap: 3px;
}

.stack {
    display: flex;
    flex-direction: column;
    gap: 2px;
    padding-top: 1px;
}

.stack button {
    height: 13px;
}

.g-styles .tools,
.g-cells .tools {
    justify-content: space-between;
}

.g-cells .tools {
    padding: 1px 6px 0;
}

.divided {
    margin-left: 4px;
    padding-left: 3px;
    border-left: 1px solid #b5cae6;
}

.wide {
    gap: 2px;
}

.labels {
    align-items: flex-start;
}

.sigma {
    width: 12px;
    font-size: 11px;
    color: #111;
}

.g-edit .tools {
    gap: 3px;
}

.big .az {
    height: 22px;
    margin-bottom: 1px;
}

.big .az span {
    flex-direction: column;
    font-family: "Liberation Sans", Arial, sans-serif;
    font-size: 10px;
    line-height: 11px;
}

.az svg {
    height: 16px;
}

.az .a { color: #2f55b5; }
.az .z { color: #a82430; }

/* Formula bar */
.formula-bar {
    display: flex;
    align-items: center;
    height: 18px;
    padding: 1px 0 0;
    background: #fff;
    border-bottom: 2px solid #a9c4ea;
}

.name-box {
    width: 121px;
    padding-left: 50px;
    font: 10px "Liberation Sans", Arial, sans-serif;
    color: #333;
}

.formula-bar > .caret {
    border-width: 3px;
    border-bottom: none;
    margin: 0 3px;
}

.fx {
    justify-content: space-between;
    width: 62px;
    height: 14px;
    margin-left: 5px;
    padding-right: 5px;
    border-right: 1px solid #88a8d4;
    border-radius: 7px 0 0 7px;
    background: linear-gradient(#dde7f4, #b7cbe6);
    font: bold 10px "Liberation Serif", serif;
    color: #333;
}

.fx small {
    font-size: 7px;
}

.knob {
    width: 11px;
    height: 11px;
    border: 1px solid #9db3d4;
    border-radius: 50%;
}

.formula {
    flex: 1;
}

.expand {
    width: 12px;
    height: 14px;
    border: 1px solid #8daedb;
    background: #d6e5f8;
}

.expand svg {
    width: 8px;
}

/* Worksheet */
.sheet {
    display: flex;
    flex: 1;
    min-height: 0;
    background: #fff;
}

.cells {
    flex: 1;
    height: 100%;
}

table {
    width: 100%;
    height: 100%;
    table-layout: fixed;
    border-collapse: collapse;
    font-family: "Liberation Sans", Arial, sans-serif;
    font-size: 10px;
    line-height: 10px;
    color: #3b1f40;
}

th,
td {
    padding: 0;
    border: 1px solid #d8dce6;
    text-align: center;
    font-weight: normal;
    white-space: nowrap;
}

th {
    border-color: #a9bbd4;
    background: #e3e9f2;
    color: #4a5060;
}

thead th {
    height: 14px;
    background: linear-gradient(#f4f7fb, #d5dce6);
}

tbody th {
    border-left: none;
}

.corner {
    background: linear-gradient(135deg, #a9c4e9 70%, #dce8f7 70%);
}

th.current {
    background: #f6c26c;
}

.data th,
.data td {
    height: 13px;
    padding-top: 1px;
}

.data td:nth-child(-n+14) {
    border-color: #222;
}

.data .num {
    text-align: right;
    padding-right: 1px;
}

.data .txt {
    text-align: left;
    padding-left: 1px;
}

.c-head { width: 19px; }
.c-a { width: 30px; }
.c-b { width: 49px; }
.c-c { width: 100px; }
.c-d { width: 51px; }
.c-e { width: 40px; }
.c-f { width: 59px; }
.c-g { width: 86px; }
.c-h { width: 53px; }
.c-i { width: 42px; }
.c-j { width: 65px; }
.c-k { width: 45px; }
.c-l { width: 68px; }
.c-m { width: 60px; }
.c-n { width: 49px; }

/* Scroll bars */
.vscroll {
    display: flex;
    flex-direction: column;
    width: 15px;
    border-left: 1px solid #6f94c8;
    background: #7c9cc8;
    border-right: 3px solid #b8d2f2;
}

.vscroll .split {
    height: 3px;
    margin: 1px 0;
    background: #e8f0fa;
}

.vscroll button {
    height: 12px;
}

.vscroll i,
.hscroll button i {
    width: 0;
    border: 3px solid transparent;
}

.vscroll .up i {
    border-bottom-color: #2c4a80;
    border-top: none;
}

.vscroll .down i {
    border-top-color: #2c4a80;
    border-bottom: none;
}

.vscroll .thumb {
    display: flex;
    align-items: center;
    justify-content: center;
    flex: 1;
    margin-bottom: 22px;
    border-radius: 1px;
    background: linear-gradient(to right, #e8eff8, #b8c8de);
}

.vscroll .grip {
    width: 5px;
    height: 5px;
    border: none;
    background: repeating-linear-gradient(#7b8da8 0 1px, transparent 1px 2px);
}

.sheet-bar {
    display: flex;
    align-items: stretch;
    height: 11px;
    background: #9ab8dc;
    border-top: 1px solid #7e9fce;
    font-size: 9px;
}

.sheet-nav {
    display: flex;
    align-items: center;
    width: 48px;
    background: #cadcf2;
}

.sheet-nav svg {
    width: 44px;
    height: 10px;
}

.sheet-tab {
    width: 42px;
    border-right: 1px solid #7e9fce;
    background: #d8e4f4;
    color: #65758f;
}

.sheet-tab.active {
    width: 38px;
    border: none;
    background: #fff;
    color: #2a4a86;
    font-weight: bold;
}

.sheet-tab.new {
    width: 32px;
    clip-path: polygon(0 0, 100% 0, 78% 100%, 0 100%);
    background: linear-gradient(120deg, #fff 15%, #7e9fce 15% 18%, #dfe8f4 18%);
}

.sheet-tab svg {
    width: 14px;
    height: 10px;
}

.sheet-bar .fill {
    flex: 1;
}

.hscroll {
    display: flex;
    width: 399px;
    background: #7c9cc8;
}

.hscroll .split {
    width: 3px;
    margin: 1px 1px;
    background: #e8f0fa;
}

.hscroll button {
    width: 12px;
}

.hscroll .lt {
    border-right-color: #2c4a80;
    border-left: none;
}

.hscroll .rt {
    border-left-color: #2c4a80;
    border-right: none;
}

.hscroll .thumb {
    display: flex;
    align-items: center;
    justify-content: center;
    flex: 1;
    margin-right: 46px;
    border-radius: 1px;
    background: linear-gradient(#eef3fa, #b4c4da);
}

.hscroll .grip {
    width: 6px;
    height: 4px;
    background: repeating-linear-gradient(to right, #7b8da8 0 1px, transparent 1px 2px);
}

/* Status bar */
.status {
    display: flex;
    align-items: center;
    height: 15px;
    background: linear-gradient(#dbe9fb, #bcd5f5 60%, #d0e2fa);
    border-top: 1px solid #89a9d6;
}

.ready {
    flex: 1;
    padding-left: 5px;
}

.ready::after {
    content: "";
    margin-left: 6px;
    border-left: 1px solid #9bbae4;
}

.zoom-area {
    display: flex;
    align-items: center;
    height: 14px;
    padding: 0 5px 0 4px;
    border-left: 1px solid #7e9fce;
    background: linear-gradient(#b9d2f2, #98b9e4 60%, #b4cef0);
}

.views {
    display: flex;
    margin-right: 6px;
}

.views button {
    width: 14px;
    height: 13px;
    border: 1px solid #8ca3c4;
    background: #b9cbe2;
}

.views .on {
    background: #fbd38a;
}

.views svg {
    height: 10px;
}

.percent {
    width: 28px;
}

.round {
    width: 11px;
    height: 11px;
    border: 1px solid #5f7499;
    border-radius: 50%;
    background: #e9f0fa;
    color: #333;
    line-height: 8px;
}

.status input {
    width: 79px;
    height: 10px;
    background: linear-gradient(#7f97bd, #7f97bd) center / 100% 1px no-repeat;
}

.status input::-webkit-slider-thumb {
    appearance: none;
    width: 6px;
    height: 8px;
    border: 1px solid #5f7499;
    border-radius: 0 0 3px 3px;
    background: #e9f0fa;
}

/* Taskbar */
.taskbar {
    display: flex;
    height: 21px;
    background: linear-gradient(#3f80f0, #245edb 15%, #2459d4 85%, #1941a5);
    font-family: "Noto Sans", Tahoma, sans-serif;
    color: #fff;
}

.start {
    gap: 4px;
    width: 73px;
    margin-right: 8px;
    padding-right: 8px;
    border-radius: 0 8px 8px 0;
    background: linear-gradient(#5fae5d, #3a973a 20%, #378f37 80%, #276b2a);
    font: italic bold 13px "Open Sans", sans-serif;
    text-shadow: 1px 1px 1px #1c4d1c;
}

.start svg {
    width: 14px;
    height: 14px;
}

.task {
    justify-content: flex-start;
    gap: 3px;
    width: 121px;
    height: 18px;
    margin: 2px 1px 0 0;
    padding-left: 7px;
    border-radius: 2px;
    background: linear-gradient(#5c9bfc, #3c81f3 20%, #3a7cec);
    overflow: hidden;
}

.task.alert {
    background: linear-gradient(#f09a35, #e07b0d 20%, #dd7605);
}

.task.pressed {
    background: #1e4fb8;
}

.lang {
    margin-left: auto;
    padding: 6px 14px 0 0;
}

.tray {
    display: flex;
    align-items: center;
    gap: 3px;
    padding-right: 10px;
    border-left: 1px solid #0f5fc0;
    background: linear-gradient(#3dbaf5, #149beb 20%, #1290e4 85%, #0d6fc0);
}

.chevron {
    flex: none;
    width: 10px;
    height: 10px;
    margin-left: -6px;
    border-radius: 50%;
    background: #4a9af0;
}

.chevron svg {
    width: 10px;
    height: 10px;
}

.tray time {
    padding-left: 4px;
}

/* Save As dialog */
.dialog {
    position: absolute;
    left: 192px;
    top: 166px;
    width: 593px;
    height: 347px;
    display: flex;
    flex-direction: column;
    border: 3px solid #0a46dc;
    border-top: none;
    border-radius: 6px 6px 0 0;
    background: #ece9d8;
    font-family: "Noto Sans", Tahoma, sans-serif;
    color: #111;
}

.dialog-title {
    display: flex;
    align-items: center;
    gap: 2px;
    height: 22px;
    margin: 0 -3px;
    padding: 2px 4px 0 6px;
    border-radius: 6px 6px 0 0;
    background: linear-gradient(#0a58dc, #2b7bf6 10%, #0354e4 25%, #0558ec 80%, #0040c8);
    color: #fff;
}

.dialog-title h2 {
    flex: 1;
    font-size: 9px;
    font-weight: bold;
}

.ask,
.close {
    width: 17px;
    height: 16px;
    border: 1px solid #fff;
    border-radius: 2px;
    background: #3d75ee;
    font-size: 12px;
    font-weight: bold;
}

.close {
    background: #e0532e;
}

.dialog-body {
    display: grid;
    grid-template-columns: 70px 1fr;
    gap: 2px 5px;
    padding: 5px 5px 7px 4px;
}

.lookin-label {
    padding: 3px 6px 0 0;
    text-align: center;
}

.lookin {
    display: flex;
    align-items: center;
    justify-content: space-between;
}

.xp-select {
    display: flex;
    align-items: center;
    flex: 1;
    height: 15px;
    padding: 1px;
    border: 1px solid #7f9db9;
    background: #fff;
}

.xp-select select,
.xp-select input {
    flex: 1;
    height: 11px;
    line-height: 11px;
}

.with-icon {
    flex: none;
    width: 387px;
    padding-left: 4px;
    gap: 3px;
}

.highlight select {
    background: #316ac5;
    color: #fff;
}

.drop {
    display: flex;
    align-items: center;
    justify-content: center;
    width: 11px;
    height: 12px;
    background: #c4d5fb;
}

.drop::before {
    content: "";
    width: 4px;
    height: 4px;
    margin-bottom: 2px;
    border: solid #4d6185;
    border-width: 0 2px 2px 0;
    transform: rotate(45deg);
}

.dialog-tools {
    display: flex;
    gap: 6px;
}

.dialog-tools .caret {
    margin: 0 0 0 5px;
}

.sep {
    padding-left: 3px;
    border-left: 1px solid #c5c2b2;
}

.places,
.files {
    border: 1px solid #9aa5a8;
}

.places {
    padding-top: 1px;
}

.places button {
    justify-content: flex-start;
    gap: 2px;
    width: 100%;
    height: 22px;
    padding-left: 2px;
    white-space: normal;
    text-align: left;
    line-height: 9px;
}

.places .selected {
    height: 23px;
    border: 1px solid #8b98a0;
    border-left: none;
    background: #fff;
}

.files {
    height: 233px;
    margin: 0;
    padding: 1px;
    background: #fff;
    list-style: none;
}

.files li {
    display: flex;
    align-items: center;
    height: 12px;
    gap: 1px;
}

.field {
    display: flex;
    width: 439px;
    margin-top: 2px;
}

.field label {
    width: 46px;
    padding-top: 1px;
}

.dialog-actions {
    display: flex;
    gap: 7px;
    margin: 0 5px 0 4px;
    padding: 5px 0;
    border-top: 1px solid #d0cdbd;
}

.xp-button {
    width: 57px;
    height: 16px;
    border: 1px solid #1f4a80;
    border-radius: 2px;
    background: linear-gradient(#fff, #f2f1ea 80%, #dcd8cc);
}

.xp-button.primary {
    box-shadow: inset 0 0 0 1px #9dbcec;
}

.tools-menu {
    justify-content: space-between;
    width: 68px;
    margin-right: auto;
    padding: 0 0 0 19px;
}

/* Annotations */
.callout {
    position: absolute;
    left: 102px;
    top: 514px;
    width: 411px;
    margin: 0;
    padding: 13px 9px 11px;
    border: 4px solid #f00;
    border-radius: 2px;
    background: #fff;
    font-size: 17px;
    line-height: 19px;
    color: #111;
}

.arrow-down {
    position: absolute;
    left: 462px;
    top: 474px;
    width: 20px;
    height: 22px;
}

.arrow-up {
    position: absolute;
    left: 673px;
    top: 505px;
    width: 34px;
    height: 46px;
}
```
